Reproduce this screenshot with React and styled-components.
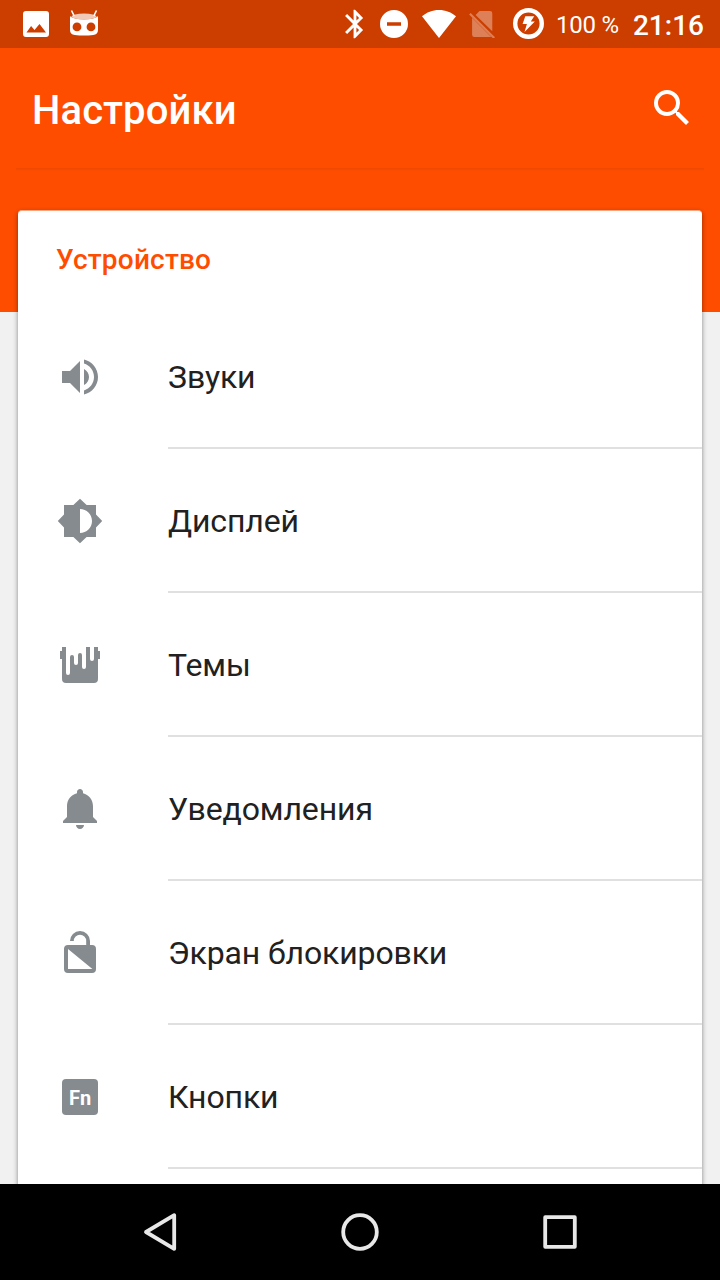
import React from 'react';
import styled, { createGlobalStyle } from 'styled-components'

const GlobalStyle = createGlobalStyle`
* {
  box-sizing: border-box;
}
body {
  margin: 0;
  background: #000;
  font-family: Roboto, "Noto Sans", sans-serif;
}
`

const icons = {
  sound: <path d="M3 9v6h4l5 5V4L7 9H3zm13.5 3c0-1.77-1.02-3.29-2.5-4.03v8.05c1.48-.73 2.5-2.25 2.5-4.02zM14 3.23v2.06c2.89.86 5 3.54 5 6.71s-2.11 5.85-5 6.71v2.06c4.01-.91 7-4.49 7-8.77s-2.99-7.86-7-8.77z" />,
  display: <path d="M20 15.31L23.1 12 20 8.69V4h-4.69L12 .9 8.69 4H4v4.69L.9 12 4 15.31V20h4.69L12 23.1 15.31 20H20v-4.69zM12 18V6c3.31 0 6 2.69 6 6s-2.69 6-6 6z" />,
  themes: <path d="M3 3h2v13a1 1 0 0 0 2 0V8a1 1 0 0 1 2 0v3a1 1 0 0 0 2 0V7a1 1 0 0 1 2 0v6a1 1 0 0 0 2 0V3h2v6a1 1 0 0 0 2 0V3h2v2h1v4h-1v10a2 2 0 0 1-2 2H5a2 2 0 0 1-2-2V9H2V5h1z" />,
  bell: <path d="M12 22c1.1 0 2-.9 2-2h-4c0 1.1.9 2 2 2zm6.5-6v-5.5c0-3.07-2.13-5.64-5-6.32V3.5c0-.83-.67-1.5-1.5-1.5s-1.5.67-1.5 1.5v.68c-2.87.68-5 3.25-5 6.32V16l-2 2v1h17v-1l-2-2z" />,
  lock: <path fillRule="evenodd" d="M7 6a5 5 0 0 1 10 0v2h1a2 2 0 0 1 2 2v10a2 2 0 0 1-2 2H6a2 2 0 0 1-2-2V10a2 2 0 0 1 2-2h9.1V6a3.1 3.1 0 0 0-6.2 0zM6 10v10h12.2z" />,
}

const items = [
  { icon: 'sound', title: 'Звуки' },
  { icon: 'display', title: 'Дисплей' },
  { icon: 'themes', title: 'Темы' },
  { icon: 'bell', title: 'Уведомления' },
  { icon: 'lock', title: 'Экран блокировки' },
  { icon: 'fn', title: 'Кнопки' },
]

function StatusIcons() {
  return <>
    <Glyph $left={22} width="28" height="28" viewBox="0 0 28 28">
      <path fillRule="evenodd" d="M4 1h20a3 3 0 0 1 3 3v20a3 3 0 0 1-3 3H4a3 3 0 0 1-3-3V4a3 3 0 0 1 3-3zM4.500 22.500H24L17.500 14l-5 6-3.400-4.100z" />
    </Glyph>
    <Glyph $left={18} width="32" height="28" viewBox="0 0 32 28">
      <path d="M3.500.5L6.200 6M28.500.5L25.800 6" stroke="#fff" strokeWidth="1.600" />
      <ellipse cx="16" cy="6.500" rx="12.500" ry="2.900" opacity=".72" />
      <path fillRule="evenodd" d="M2 6.200c3 2.300 8 3.200 14 3.200s11-.9 14-3.200V20c0 3.200-1.600 4.500-4.800 5-5.800.8-12.600.8-18.400 0C3.600 24.500 2 23.200 2 20zM9 12.500a4.400 4.400 0 1 0 0 8.800 4.400 4.400 0 0 0 0-8.800zm14 0a4.400 4.400 0 1 0 0 8.800 4.400 4.400 0 0 0 0-8.800z" />
    </Glyph>
    <Spacer />
    <Glyph width="34" height="34" viewBox="0 0 24 24">
      <path d="M17.710 7.710L12 2h-1v7.590L6.410 5 5 6.410 10.590 12 5 17.590 6.410 19 11 14.410V22h1l5.710-5.710-4.300-4.290 4.300-4.290zM13 5.830l1.880 1.880L13 9.590V5.830zm1.880 10.460L13 18.170v-3.760l1.880 1.880z" />
    </Glyph>
    <Glyph $left={8} width="28" height="28" viewBox="0 0 28 28">
      <path fillRule="evenodd" d="M14 0a14 14 0 1 0 0 28 14 14 0 0 0 0-28zM7 12.200h14v3.600H7z" />
    </Glyph>
    <Glyph $left={14} width="34" height="28" viewBox="0 0 34 28">
      <path d="M17 28L0 6.300C4.500 2.400 10.500 0 17 0s12.500 2.400 17 6.300z" />
    </Glyph>
    <Glyph $left={13} width="28" height="28" viewBox="0 0 28 28" opacity=".34">
      <path d="M10.500 1H21a2.300 2.300 0 0 1 2.300 2.300v18L6.600 4.900zM3.100 7.700L22.300 27H5.400a2.300 2.300 0 0 1-2.300-2.300z" />
      <path d="M.9 3.700L25.200 28" stroke="#fff" strokeWidth="2.200" />
    </Glyph>
    <Glyph $left={16} width="32" height="32" viewBox="0 0 32 32">
      <circle cx="15.500" cy="15.500" r="13.300" fill="none" stroke="#fff" strokeWidth="4.400" />
      <path d="M12.300 8.200h8.900l-3.400 5.300h4L11.500 24l2.400-7.900H9.600z" />
    </Glyph>
  </>
}

function App() {
  return <Screen>
    <GlobalStyle />
    <StatusBar>
      <StatusIcons />
      <Battery>100 %</Battery>
      <Clock>21:16</Clock>
    </StatusBar>
    <Content>
      <Toolbar>
        <Title>Настройки</Title>
        <svg width="48" height="48" viewBox="0 0 24 24" fill="#fff">
          <path d="M15.500 14h-.79l-.28-.27A6.471 6.471 0 0 0 16 9.500 6.500 6.500 0 1 0 9.500 16c1.610 0 3.090-.59 4.230-1.570l.27.28v.79l5 4.990L20.490 19l-4.990-5zm-6 0C7.010 14 5 11.990 5 9.500S7.010 5 9.500 5 14 7.010 14 9.500 11.990 14 9.500 14z" />
        </svg>
      </Toolbar>
      <Edge />
      <Card>
        <CardTitle>Устройство</CardTitle>
        {
          items.map(item =>
            <Row key={item.title}>
              <IconCell>
                {item.icon === 'fn'
                  ? <FnKey>Fn</FnKey>
                  : <svg width="48" height="48" viewBox="0 0 24 24" fill="#858b8f">{icons[item.icon]}</svg>}
              </IconCell>
              <Label>{item.title}</Label>
            </Row>
          )
        }
      </Card>
    </Content>
    <NavBar>
      <NavButton>
        <svg width="48" height="48" viewBox="0 0 48 48">
          <path d="M38.200 7.200v33.600L10 24z" />
        </svg>
      </NavButton>
      <NavButton>
        <svg width="48" height="48" viewBox="0 0 48 48">
          <circle cx="24" cy="24" r="16.800" />
        </svg>
      </NavButton>
      <NavButton>
        <svg width="48" height="48" viewBox="0 0 48 48">
          <rect x="9.200" y="9.200" width="29.600" height="29.600" />
        </svg>
      </NavButton>
    </NavBar>
  </Screen>
}

const Screen = styled.div`
  width: 720px;
  height: 1280px;
  display: flex;
  flex-direction: column;
  overflow: hidden;
`

const StatusBar = styled.header`
  height: 48px;
  display: flex;
  align-items: center;
  background: #cc3d00;
  color: #fff;
  padding-right: 16px;
`

const Glyph = styled.svg`
  flex: none;
  fill: #fff;
  margin-left: ${props => props.$left || 0}px;
`

const Spacer = styled.div`
  flex: 1;
`

const Battery = styled.span`
  font-size: 24px;
  line-height: 28px;
  letter-spacing: -0.2px;
  margin-left: 11px;
  padding-top: 2px;
  white-space: nowrap;
`

const Clock = styled.span`
  font-size: 28px;
  line-height: 32px;
  font-weight: 500;
  margin-left: 14px;
  padding-top: 4px;
`

const Content = styled.main`
  flex: 1;
  min-height: 0;
  overflow: hidden;
  display: flex;
  flex-direction: column;
  background: linear-gradient(#ff4d00 264px, #f1f1f1 264px);
`

const Toolbar = styled.div`
  height: 120px;
  flex: none;
  display: flex;
  justify-content: space-between;
  align-items: center;
  padding: 0 24px 0 32px;
  svg {
    margin-top: -1px;
  }
`

const Title = styled.h1`
  margin: 0;
  padding-top: 6px;
  color: #fff;
  font-size: 40px;
  line-height: 48px;
  letter-spacing: 0.1px;
  font-weight: 500;
`

/* thin shade under the toolbar */
const Edge = styled.div`
  height: 3px;
  flex: none;
  margin: 0 16px 39px;
  background: linear-gradient(rgba(0, 0, 0, 0.07), rgba(0, 0, 0, 0));
`

const Card = styled.section`
  flex: none;
  margin: 0 18px;
  height: 1100px;
  background: #fff;
  border-top: 1px solid #ffa57f;
  border-radius: 4px;
  box-shadow: 0 2px 5px rgba(0, 0, 0, 0.45);
`

const CardTitle = styled.h2`
  margin: 0;
  height: 94px;
  padding: 32px 38px 0;
  color: #ff4d00;
  font-size: 28px;
  line-height: 33px;
  letter-spacing: 0.2px;
  font-weight: 500;
`

const Row = styled.div`
  height: 144px;
  display: flex;
`

const IconCell = styled.div`
  width: 150px;
  padding-left: 38px;
  padding-top: 48px;
`

const Label = styled.div`
  flex: 1;
  display: flex;
  align-items: center;
  padding-top: 2px;
  border-bottom: 2px solid #e0e0e0;
  color: #212121;
  font-size: 32px;
  line-height: 38px;
  letter-spacing: -0.12px;
`

const FnKey = styled.div`
  width: 36px;
  height: 36px;
  margin: 6px;
  border-radius: 4px;
  background: #858b8f;
  color: #fff;
  font-size: 20px;
  line-height: 38px;
  font-weight: 700;
  text-align: center;
`

const NavBar = styled.nav`
  height: 96px;
  flex: none;
  display: flex;
  justify-content: center;
  background: #000;
`

const NavButton = styled.div`
  width: 200px;
  display: flex;
  justify-content: center;
  align-items: center;
  svg {
    fill: none;
    stroke: #e8e8e8;
    stroke-width: 3.800;
    stroke-linejoin: round;
  }
`

export default App;
